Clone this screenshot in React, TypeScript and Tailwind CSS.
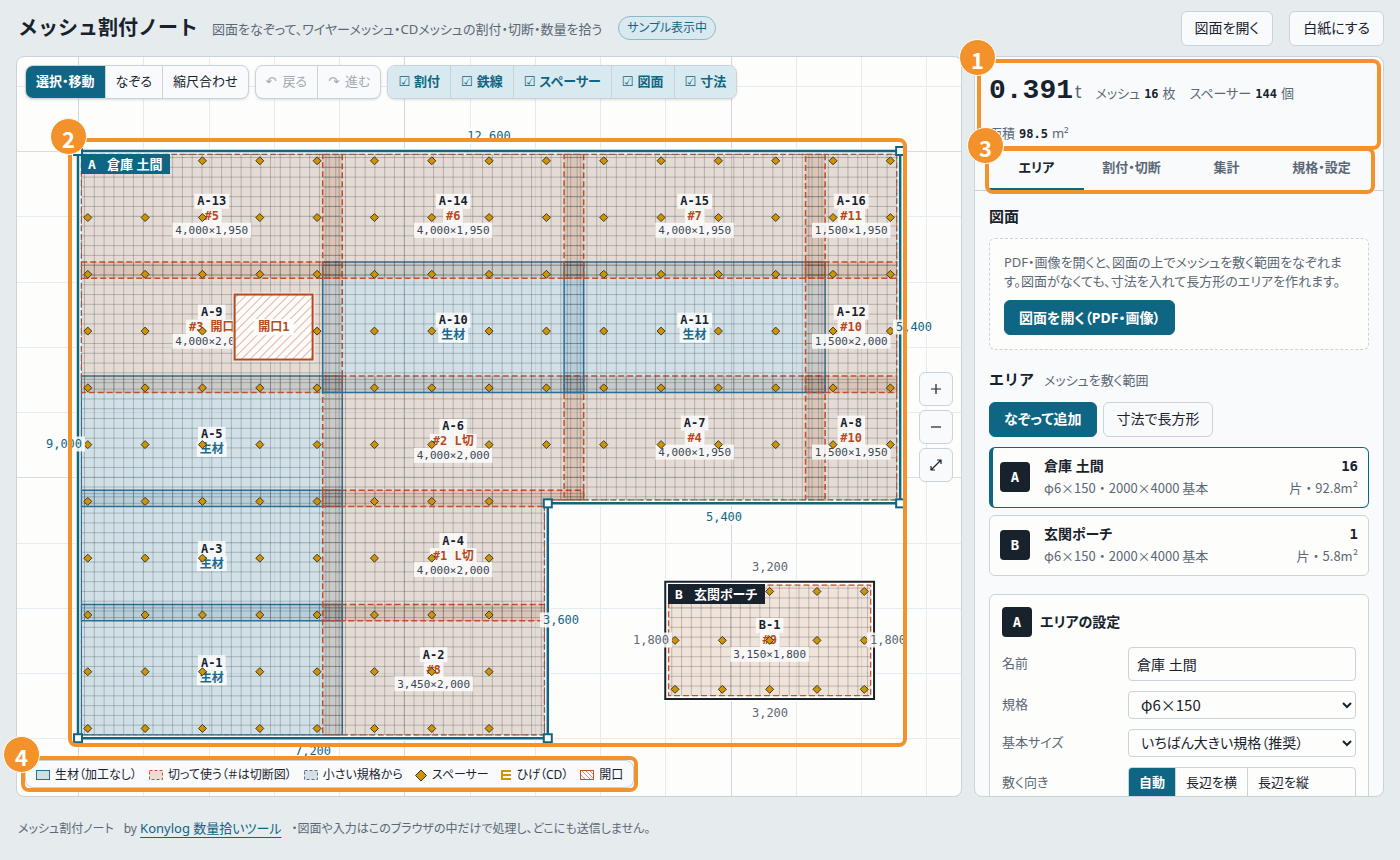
import { useState } from 'react'
import type { ReactNode } from 'react'
import clsx from 'clsx'

type Point = [number, number]

interface Piece {
  id: string
  kind: 'raw' | 'cut'
  note: string
  size?: string
  // x1, y1, x2, y2 in mm
  box: [number, number, number, number]
  shape?: Point[]
}

const SCALE = 0.06525
const ORIGIN_X = 61
const ORIGIN_Y = 94

const px = (mm: number) => ORIGIN_X + mm * SCALE
const py = (mm: number) => ORIGIN_Y + mm * SCALE
const toPoints = (list: Point[]) => list.map(([x, y]) => `${px(x)},${py(y)}`).join(' ')
const range = (n: number) => Array.from({ length: n }, (_, i) => i)

const MONO = "font-['DejaVu_Sans_Mono','Noto_Sans_CJK_JP',monospace]"
const WIDE = "font-['Noto_Sans_CJK_JP',sans-serif] [font-feature-settings:normal]"

const pieces: Piece[] = [
  { id: 'A-1', kind: 'raw', note: '生材', box: [50, 6950, 4050, 8950] },
  { id: 'A-2', kind: 'cut', note: '#8', size: '3,450×2,000', box: [3750, 6950, 7150, 8950] },
  { id: 'A-3', kind: 'raw', note: '生材', box: [50, 5200, 4050, 7200] },
  {
    id: 'A-4',
    kind: 'cut',
    note: '#1 L切',
    size: '4,000×2,000',
    box: [3750, 5200, 7750, 7200],
    shape: [[3750, 5200], [7750, 5200], [7750, 5350], [7150, 5350], [7150, 7200], [3750, 7200]],
  },
  { id: 'A-5', kind: 'raw', note: '生材', box: [50, 3450, 4050, 5450] },
  {
    id: 'A-6',
    kind: 'cut',
    note: '#2 L切',
    size: '4,000×2,000',
    box: [3750, 3450, 7750, 5450],
    shape: [[3750, 3450], [7750, 3450], [7750, 5350], [7150, 5350], [7150, 5450], [3750, 5450]],
  },
  { id: 'A-7', kind: 'cut', note: '#4', size: '4,000×1,950', box: [7450, 3450, 11450, 5350] },
  { id: 'A-8', kind: 'cut', note: '#10', size: '1,500×1,950', box: [11150, 3450, 12550, 5350] },
  { id: 'A-9', kind: 'cut', note: '#3 開口', size: '4,000×2,000', box: [50, 1700, 4050, 3700] },
  { id: 'A-10', kind: 'raw', note: '生材', box: [3750, 1700, 7750, 3700] },
  { id: 'A-11', kind: 'raw', note: '生材', box: [7450, 1700, 11450, 3700] },
  { id: 'A-12', kind: 'cut', note: '#10', size: '1,500×2,000', box: [11150, 1700, 12550, 3700] },
  { id: 'A-13', kind: 'cut', note: '#5', size: '4,000×1,950', box: [50, 50, 4050, 1950] },
  { id: 'A-14', kind: 'cut', note: '#6', size: '4,000×1,950', box: [3750, 50, 7750, 1950] },
  { id: 'A-15', kind: 'cut', note: '#7', size: '4,000×1,950', box: [7450, 50, 11450, 1950] },
  { id: 'A-16', kind: 'cut', note: '#11', size: '1,500×1,950', box: [11150, 50, 12550, 1950] },
  { id: 'B-1', kind: 'cut', note: '#9', size: '3,150×1,800', box: [9050, 6650, 12150, 8350] },
]

const areaA: Point[] = [[0, 0], [12600, 0], [12600, 5400], [7200, 5400], [7200, 9000], [0, 9000]]
const areaB: Point[] = [[9000, 6600], [12200, 6600], [12200, 8400], [9000, 8400]]
const innerA: Point[] = [[50, 50], [12550, 50], [12550, 5350], [7150, 5350], [7150, 8950], [50, 8950]]

const spacers: Point[] = [
  ...range(11).flatMap((row) =>
    range(15)
      .filter((col) => (row < 6 || col < 8) && !(row === 3 && col === 3))
      .map((col): Point => [150 + (col * 12300) / 14, 150 + row * 870]),
  ),
  ...range(3).flatMap((row) => range(5).map((col): Point => [9150 + col * 725, 6750 + row * 750])),
]

const dims = [
  { text: '12,600', x: 472, y: 79, active: true },
  { text: '5,400', x: 897, y: 270, active: true },
  { text: '5,400', x: 707, y: 460, active: true },
  { text: '3,600', x: 544, y: 563, active: true },
  { text: '7,200', x: 296, y: 694, active: true },
  { text: '9,000', x: 47, y: 387, active: true },
  { text: '3,200', x: 753, y: 510, active: false },
  { text: '3,200', x: 753, y: 656, active: false },
  { text: '1,800', x: 634, y: 583, active: false },
  { text: '1,800', x: 871, y: 583, active: false },
]

const textWidth = (text: string, size: number) =>
  [...text].reduce((sum, ch) => sum + (ch.charCodeAt(0) > 0x2fff ? size : size * 0.6), 0)

const Tag = ({ x, y, text, size, fill, bold }: { x: number; y: number; text: string; size: number; fill: string; bold?: boolean }) => {
  const w = textWidth(text, size) + 6
  return (
    <g>
      <rect x={x - w / 2} y={y - 7.5} width={w} height={15} fill="#fdfdfb" fillOpacity={0.85} />
      <text x={x} y={y + 4} textAnchor="middle" fontSize={size} fontWeight={bold ? 700 : 400} fill={fill} className={MONO}>
        {text}
      </text>
    </g>
  )
}

const PieceShape = ({ piece }: { piece: Piece }) => {
  const [x1, y1, x2, y2] = piece.box
  const raw = piece.kind === 'raw'
  const outline = toPoints(piece.shape ?? [[x1, y1], [x2, y1], [x2, y2], [x1, y2]])
  const cols = range(Math.floor((x2 - x1 - 50) / 150) + 1).map((i) => x1 + 50 + i * 150)
  const rows = range(Math.floor((y2 - y1 - 50) / 150) + 1).map((i) => y1 + 50 + i * 150)
  return (
    <g>
      <clipPath id={`clip-${piece.id}`}>
        <polygon points={outline} />
      </clipPath>
      <polygon points={outline} fill={raw ? '#1a6a96' : '#a04a16'} fillOpacity={0.14} />
      <g clipPath={`url(#clip-${piece.id})`} stroke="#18222d" strokeOpacity={0.23} strokeWidth={1}>
        {cols.map((x) => (
          <line key={x} x1={px(x)} x2={px(x)} y1={py(y1)} y2={py(y2)} />
        ))}
        {rows.map((y) => (
          <line key={y} x1={px(x1)} x2={px(x2)} y1={py(y)} y2={py(y)} />
        ))}
      </g>
      <polygon
        points={outline}
        fill="none"
        stroke={raw ? '#2a6f97' : '#c2512a'}
        strokeWidth={1.5}
        strokeDasharray={raw ? undefined : '6 3'}
      />
    </g>
  )
}

const AreaName = ({ x, y, w, id, name, fill }: { x: number; y: number; w: number; id: string; name: string; fill: string }) => (
  <g>
    <rect x={x} y={y} width={w} height={20} fill={fill} />
    <g fontSize={13} fontWeight={700} fill="#fff" className={MONO}>
      <text x={x + 7} y={y + 15}>{id}</text>
      <text x={x + 26} y={y + 15} className="font-['Noto_Sans','Noto_Sans_CJK_JP',sans-serif]">
        {name}
      </text>
    </g>
  </g>
)

const Plan = () => (
  <svg className="block h-full w-full" role="img" aria-label="割付図">
    <defs>
      <pattern id="hatch" width="6" height="6" patternUnits="userSpaceOnUse" patternTransform="rotate(45)">
        <line x1="0" y1="0" x2="0" y2="6" stroke="#c2512a" strokeOpacity="0.7" strokeWidth="1.2" />
      </pattern>
    </defs>

    {range(14).map((i) => (
      <rect key={`v${i}`} x={Math.round(px(i * 1000))} y={0} width={1} height="100%" fill={i % 5 === 0 ? '#d0d9e2' : '#e6eaef'} />
    ))}
    {range(11).map((i) => (
      <rect key={`h${i}`} x={0} y={Math.round(py((i - 1) * 1000))} width="100%" height={1} fill={(i - 1) % 5 === 0 ? '#d6dde5' : '#e6edf0'} />
    ))}

    <polygon points={toPoints(areaA)} fill="#0f6684" fillOpacity={0.06} />
    {pieces.map((p) => (
      <PieceShape key={p.id} piece={p} />
    ))}

    {pieces.map((p) => {
      const x = px((p.box[0] + p.box[2]) / 2)
      const mid = py((p.box[1] + p.box[3]) / 2)
      const top = p.size ? mid - 15 : mid - 7
      return (
        <g key={p.id}>
          <Tag x={x} y={top} text={p.id} size={12} fill="#18222d" bold />
          <Tag x={x} y={top + 15} text={p.note} size={12} fill={p.kind === 'raw' ? '#1d6a8e' : '#b8481c'} bold />
          {p.size && <Tag x={x} y={top + 29} text={p.size} size={11} fill="#3a4653" />}
        </g>
      )
    })}

    <rect x={px(2400) - 2} y={py(2200) - 2} width={82} height={69} fill="#eef3f4" />
    <rect x={px(2400)} y={py(2200)} width={78} height={65} fill="#fdfdfb" />
    <rect x={px(2400)} y={py(2200)} width={78} height={65} fill="url(#hatch)" stroke="#b8481c" strokeWidth={2} />
    <rect x={px(3000) - 20} y={py(2700) - 8} width={40} height={16} fill="#fdfdfb" />
    <text
      x={px(3000)}
      y={py(2700) + 4}
      textAnchor="middle"
      fontSize={12}
      fontWeight={700}
      fill="#b8481c"
      className={MONO}
    >
      開口1
    </text>

    <polygon points={toPoints(innerA)} fill="none" stroke="#5b6875" strokeWidth={1} strokeDasharray="4 3" />
    <polygon points={toPoints(areaA)} fill="none" stroke="#fdfdfb" strokeWidth={5} />
    <polygon points={toPoints(areaA)} fill="none" stroke="#0f6684" strokeWidth={2.5} />
    <polygon points={toPoints(areaB)} fill="none" stroke="#fdfdfb" strokeWidth={5} />
    <polygon points={toPoints(areaB)} fill="none" stroke="#18222d" strokeWidth={2} />

    {spacers.map(([x, y]) => (
      <path
        key={`${x}-${y}`}
        d={`M${px(x)} ${py(y) - 4}l4 4l-4 4l-4 -4z`}
        fill="#d19300"
        stroke="#3a3a2c"
        strokeWidth={1}
      />
    ))}

    {dims.map((d) => (
      <Tag key={`${d.x}-${d.y}`} x={d.x} y={d.y} text={d.text} size={12} fill={d.active ? '#0f6684' : '#5b6875'} />
    ))}

    {areaA.map(([x, y]) => (
      <rect key={`${x}-${y}`} x={px(x) - 4} y={py(y) - 4} width={8} height={8} fill="#fff" stroke="#0f6684" strokeWidth={2} />
    ))}

    <AreaName x={64} y={97} w={89} id="A" name="倉庫 土間" fill="#0f6684" />
    <AreaName x={651} y={527} w={97} id="B" name="玄関ポーチ" fill="#18222d" />
  </svg>
)

const Callout = ({ n, className }: { n: number; className: string }) => (
  <div className={clsx('pointer-events-none absolute z-20 rounded-lg border-4 border-[#f3922b]', className)}>
    <span
      className={clsx(
        WIDE,
        'absolute -top-6 -left-[22px] flex size-[37px] items-center justify-center rounded-full border border-white bg-[#f3922b] pt-0.5 text-[22px] leading-none font-bold text-white',
      )}
    >
      {n}
    </span>
  </div>
)

const ToolGroup = ({ children, className }: { children: ReactNode; className?: string }) => (
  <div
    className={clsx(
      'flex h-[34px] divide-x divide-[#c8d3db] overflow-hidden rounded-lg border border-[#c8d3db] bg-[#f8fafc] text-[13px] shadow-sm',
      className,
    )}
  >
    {children}
  </div>
)

const layers = ['割付', '鉄線', 'スペーサー', '図面', '寸法']

const Toolbar = () => {
  const [shown, setShown] = useState(layers)
  const toggle = (name: string) =>
    setShown((prev) => (prev.includes(name) ? prev.filter((n) => n !== name) : [...prev, name]))

  return (
    <div className="absolute top-2 left-2 z-10 flex gap-1.5">
      <ToolGroup>
        <button className="bg-[#0f6684] px-2.5 font-bold text-white">選択・移動</button>
        <button className="px-2.5">なぞる</button>
        <button className="px-2.5">縮尺合わせ</button>
      </ToolGroup>
      <ToolGroup className="text-[#a3a9b0]">
        <button className="flex items-center gap-1.5 px-2.5" disabled>
          <span>↶</span>戻る
        </button>
        <button className="flex items-center gap-1.5 px-2.5" disabled>
          <span>↷</span>進む
        </button>
      </ToolGroup>
      <ToolGroup className="font-bold text-[#0f6684]">
        {layers.map((name) => (
          <button
            key={name}
            aria-pressed={shown.includes(name)}
            onClick={() => toggle(name)}
            className={clsx('flex items-center gap-1 px-2.5', shown.includes(name) && 'bg-[#d9e9f0]')}
          >
            <span className="font-normal">{shown.includes(name) ? '☑' : '☐'}</span>
            {name}
          </button>
        ))}
      </ToolGroup>
    </div>
  )
}

const zoomIcons = [
  { label: '拡大', d: 'M3 8h10M8 3v10' },
  { label: '縮小', d: 'M3 8h10' },
  { label: '全体表示', d: 'M3 13L13 3M9 3h4v4M3 9v4h4' },
]

const ZoomButtons = () => (
  <div className="absolute top-1/2 right-2 z-10 flex -translate-y-1/2 flex-col gap-1">
    {zoomIcons.map((icon) => (
      <button
        key={icon.label}
        aria-label={icon.label}
        className="flex size-[34px] items-center justify-center rounded-md border border-[#c8d3db] bg-[#f8fafc]"
      >
        <svg width="16" height="16" viewBox="0 0 16 16" fill="none" stroke="#18222d" strokeWidth="1.2">
          <path d={icon.d} />
        </svg>
      </button>
    ))}
  </div>
)

const legend = [
  {
    label: '生材（加工なし）',
    icon: <rect x="0.5" y="0.5" width="13" height="9" fill="#cfdfe7" stroke="#2a6f97" />,
  },
  {
    label: '切って使う（＃は切断図）',
    icon: <rect x="0.5" y="0.5" width="13" height="9" fill="#eddcd4" stroke="#c2512a" strokeDasharray="3 2" />,
  },
  {
    label: '小さい規格から',
    icon: <rect x="0.5" y="0.5" width="13" height="9" fill="#d5dde5" stroke="#5b7186" strokeDasharray="3 2" />,
  },
  {
    label: 'スペーサー',
    width: 12,
    icon: <path d="M6 0l5.500 5.500l-5.500 5.500l-5.500 -5.500z" fill="#d19300" stroke="#3a3a2c" />,
  },
  { label: 'ひげ（CD）', width: 11, icon: <path d="M10 1H1v8h9M1 5h9" fill="none" stroke="#d19300" strokeWidth="2" /> },
  {
    label: '開口',
    icon: (
      <>
        <path d="M1 5l4 4M2 1l8 8M6 1l7 7M10 1l3 3" stroke="#c2512a" strokeOpacity="0.6" />
        <rect x="0.5" y="0.5" width="13" height="9" fill="none" stroke="#c2512a" />
      </>
    ),
  },
]

const Legend = () => (
  <div className="absolute bottom-2 left-2 z-10 rounded-lg border border-[#c8d3db] bg-[#f8fafc]">
    <ul className="flex h-[26px] items-center gap-3 px-2.5 pt-0.5 text-xs">
      {legend.map((item) => (
        <li key={item.label} className="flex items-center gap-[5px] whitespace-nowrap">
          <svg width={item.width ?? 14} height="10" className="overflow-visible">
            {item.icon}
          </svg>
          {item.label}
        </li>
      ))}
    </ul>
    <Callout n={4} className="-inset-[5px]" />
  </div>
)

const Count = ({ label, value, unit }: { label: string; value: string; unit: string }) => (
  <span className="flex items-baseline gap-1">
    {label}
    <b className={clsx(MONO, 'text-xs text-[#18222d]')}>{value}</b>
    {unit}
  </span>
)

const Summary = () => (
  <div className="relative px-3.5 pt-3.5 pb-[7px]">
    <div className="flex flex-wrap items-baseline gap-x-3.5 text-[13px] text-[#5b6875]">
      <span className="flex h-10 items-baseline gap-0.5">
        <strong className="font-['Liberation_Mono',monospace] text-[28px] leading-10 font-bold text-[#18222d]">0.391</strong>
        <span className="text-lg">t</span>
      </span>
      <Count label="メッシュ" value="16" unit="枚" />
      <Count label="スペーサー" value="144" unit="個" />
      <span className="flex h-8 w-full items-end">
        <Count label="面積" value="98.5" unit="m²" />
      </span>
    </div>
    <Callout n={1} className="top-0.5 right-0.5 bottom-0 left-0.5" />
  </div>
)

const tabs = ['エリア', '割付・切断', '集計', '規格・設定']

const Tabs = () => {
  const [tab, setTab] = useState(tabs[0])
  return (
    <div className="relative border-b border-[#c8d3db] px-3.5">
      <div role="tablist" className="grid grid-cols-4">
        {tabs.map((name) => (
          <button
            key={name}
            role="tab"
            aria-selected={name === tab}
            onClick={() => setTab(name)}
            className={clsx(
              'h-10 border-b-2 pb-0.5 text-[13px] font-bold',
              name === tab ? 'border-[#0f6684] text-[#18222d]' : 'border-transparent text-[#5b6875]',
            )}
          >
            {name}
          </button>
        ))}
      </div>
      <Callout n={3} className="-top-[3px] right-2 -bottom-1 left-2.5" />
    </div>
  )
}

const Badge = ({ children }: { children: ReactNode }) => (
  <span
    className={clsx(
      MONO,
      'flex size-[30px] shrink-0 items-center justify-center rounded bg-[#18222d] text-sm font-bold text-white',
    )}
  >
    {children}
  </span>
)

const Button = ({ primary, children }: { primary?: boolean; children: ReactNode }) => (
  <button
    className={clsx(
      'h-[35px] rounded-md border text-sm whitespace-nowrap',
      primary ? 'border-[#0f6684] bg-[#0f6684] px-3.5 font-bold text-white' : 'border-[#c8d3db] bg-[#f8fafc] px-[13px]',
    )}
  >
    {children}
  </button>
)

const AreaCard = ({ id, name, count, size, active }: { id: string; name: string; count: string; size: string; active?: boolean }) => (
  <button
    className={clsx(
      'flex h-[61px] w-full items-center gap-3.5 rounded-md border bg-[#fdfdfb] pr-2.5 text-left',
      active ? 'border-l-4 border-[#0f6684] pl-[7px]' : 'border-[#c8d3db] pl-2.5',
    )}
  >
    <Badge>{id}</Badge>
    <span className="flex flex-1 flex-col">
      <b className="text-sm leading-[22px]">{name}</b>
      <span className={clsx(WIDE, 'text-[13px] leading-[22px] text-[#5b6875]')}>φ6×150・2000×4000 基本</span>
    </span>
    <span className="flex flex-col text-right">
      <b className={clsx(MONO, 'text-sm leading-[22px]')}>{count}</b>
      <span className={clsx(WIDE, 'text-[13px] leading-[22px] text-[#5b6875]')}>片・{size}m²</span>
    </span>
  </button>
)

const directions = ['自動', '長辺を横', '長辺を縦']

const AreaSettings = () => {
  const [direction, setDirection] = useState(directions[0])
  const label = 'text-[13px] text-[#5b6875]'
  return (
    <div className="mt-[18px] rounded-md border border-[#c8d3db] bg-[#fdfdfb] p-3">
      <div className="mb-2.5 flex items-center gap-2">
        <Badge>A</Badge>
        <h3 className="text-sm font-bold">エリアの設定</h3>
      </div>
      <div className="grid grid-cols-[118px_1fr] items-center gap-x-2 gap-y-2.5">
        <label htmlFor="name" className={label}>
          名前
        </label>
        <input
          id="name"
          defaultValue="倉庫 土間"
          className="h-[34px] min-w-0 rounded border border-[#c8d3db] bg-[#fdfdfb] px-2 text-sm"
        />
        <label htmlFor="spec" className={label}>
          規格
        </label>
        <select
          id="spec"
          className={clsx(WIDE, 'h-7 min-w-0 rounded border border-[#c8d3db] bg-[#fdfdfb] pl-2 text-[15px] leading-none')}
        >
          <option>φ6×150</option>
        </select>
        <label htmlFor="size" className={label}>
          基本サイズ
        </label>
        <select id="size" className="h-7 min-w-0 rounded border border-[#c8d3db] bg-[#fdfdfb] pl-2 text-sm leading-none">
          <option>いちばん大きい規格（推奨）</option>
        </select>
        <span id="direction" className={label}>
          敷く向き
        </span>
        <div
          role="group"
          aria-labelledby="direction"
          className="flex h-8 overflow-hidden rounded border border-[#c8d3db] text-[13px]"
        >
          {directions.map((name) => (
            <button
              key={name}
              onClick={() => setDirection(name)}
              className={clsx(
                'border-r border-[#c8d3db] px-2.5 last:border-r-0',
                name === direction && 'bg-[#0f6684] font-bold text-white',
              )}
            >
              {name}
            </button>
          ))}
        </div>
      </div>
    </div>
  )
}

const App = () => {
  return (
    <div className="flex h-screen flex-col bg-[#e6ebee] font-['Noto_Sans','Noto_Sans_CJK_JP','DejaVu_Sans',sans-serif] text-[#18222d] [font-feature-settings:'palt']">
      <header className="flex h-14 shrink-0 items-center px-4">
        <h1 className="ml-0.5 text-xl font-bold whitespace-nowrap [font-feature-settings:normal]">メッシュ割付ノート</h1>
        <p className="ml-3.5 pt-1 text-[13px] whitespace-nowrap text-[#5b6875]">
          図面をなぞって、ワイヤーメッシュ・CDメッシュの割付・切断・数量を拾う
        </p>
        <span className="ml-4 flex h-6 items-center rounded-full border border-[#8fb8c8] bg-[#d9e9f0] px-2 text-xs whitespace-nowrap text-[#0f6684]">
          サンプル表示中
        </span>
        <div className="ml-auto flex gap-4">
          <Button>図面を開く</Button>
          <Button>白紙にする</Button>
        </div>
      </header>

      <main className="flex min-h-0 flex-1 gap-3 px-4">
        <section className="relative min-w-0 flex-1 rounded-lg border border-[#c8d3db] bg-[#fdfdfb]">
          <div className="h-full overflow-hidden rounded-lg">
            <Plan />
          </div>
          <Toolbar />
          <ZoomButtons />
          <Callout n={2} className="top-[81px] left-[51px] h-[609px] w-[839px]" />
          <Legend />
        </section>

        <aside className="flex w-[410px] shrink-0 flex-col rounded-lg border border-[#c8d3db] bg-[#f8fafc]">
          <Summary />
          <Tabs />
          <div className="min-h-0 flex-1 overflow-hidden px-3.5 pt-3.5">
            <h2 className="text-[15px] leading-[22px] font-bold">図面</h2>
            <div className="mt-[11px] rounded-md border border-dashed border-[#c8d3db] bg-[#fdfdfb] p-3.5">
              <p className="mb-[9px] text-[13px] leading-[19px] text-[#5b6875]">
                PDF・画像を開くと、図面の上でメッシュを敷く範囲をなぞれます。図面がなくても、寸法を入れて長方形のエリアを作れます。
              </p>
              <Button primary>図面を開く（PDF・画像）</Button>
            </div>
            <div className="mt-[18px] flex items-baseline gap-2.5">
              <h2 className="text-[15px] leading-[22px] font-bold [font-feature-settings:normal]">エリア</h2>
              <span className="text-[13px] text-[#5b6875]">メッシュを敷く範囲</span>
            </div>
            <div className="mt-[11px] mb-2.5 flex gap-1.5">
              <Button primary>なぞって追加</Button>
              <Button>寸法で長方形</Button>
            </div>
            <div className="flex flex-col gap-[7px]">
              <AreaCard id="A" name="倉庫 土間" count="16" size="92.8" active />
              <AreaCard id="B" name="玄関ポーチ" count="1" size="5.8" />
            </div>
            <AreaSettings />
          </div>
        </aside>
      </main>

      <footer className="flex h-[63px] shrink-0 items-center gap-2.5 px-[18px] text-xs text-[#5b6875]">
        <span>メッシュ割付ノート</span>
        <span>
          by{' '}
          <a href="#konylog" className="text-[13px] text-[#0f6684] underline underline-offset-4">
            Konylog 数量拾いツール
          </a>
        </span>
        <span>・図面や入力はこのブラウザの中だけで処理し、どこにも送信しません。</span>
      </footer>
    </div>
  )
}

export default App
